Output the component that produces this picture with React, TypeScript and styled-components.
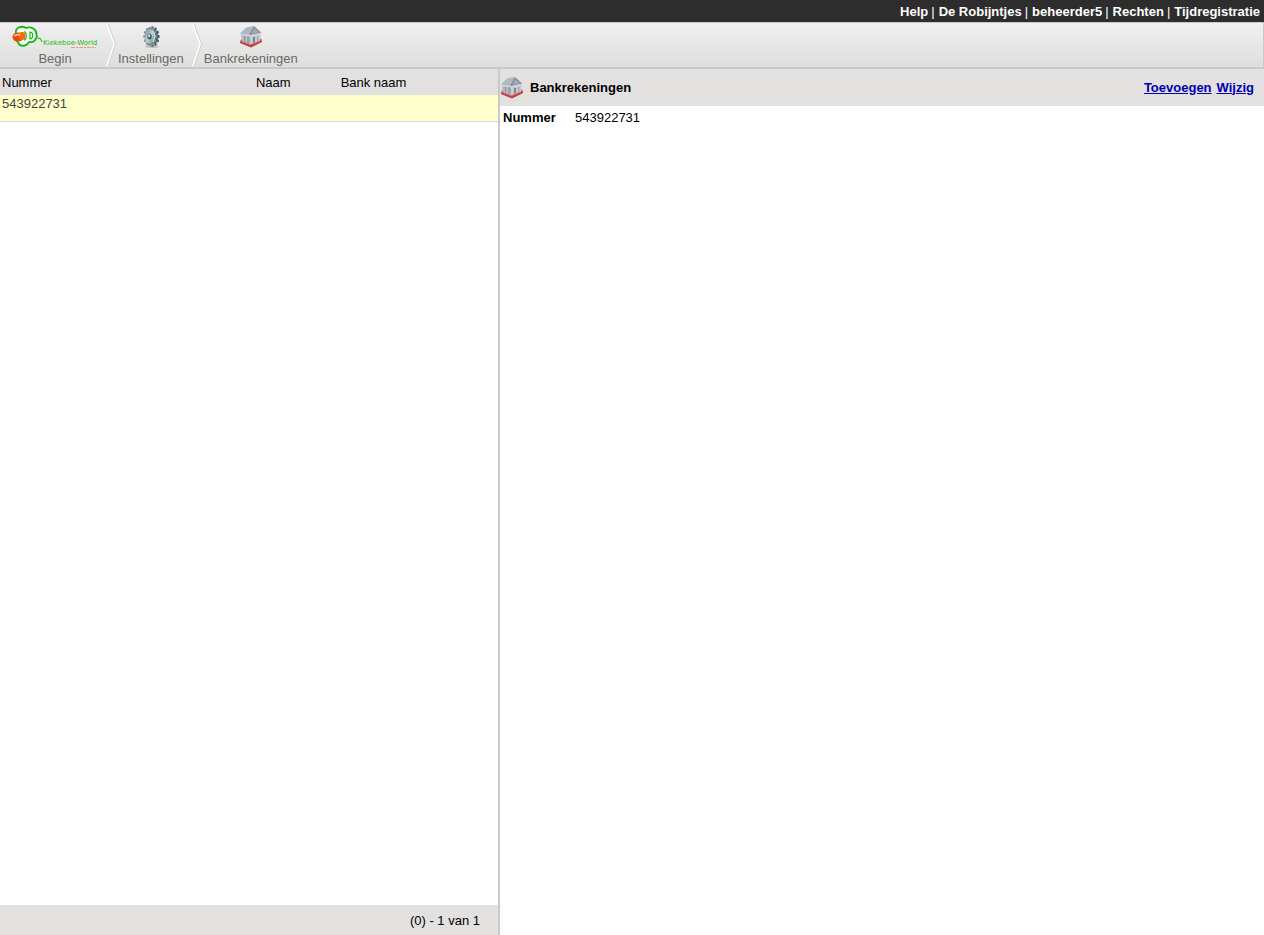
import React from "react";
import styled, { createGlobalStyle } from "styled-components";

const GlobalStyle = createGlobalStyle`
  * { box-sizing: border-box; }
  body {
    margin: 0;
    background: #fff;
    color: #000;
    font: 13px/16px "Liberation Sans", Arial, sans-serif;
  }
`;

const Page = styled.div`
  display: flex;
  flex-direction: column;
  min-height: 100vh;
`;

const TopBar = styled.nav`
  display: flex;
  justify-content: flex-end;
  align-items: center;
  height: 22px;
  padding: 1px 4px 0 0;
  background: #2d2d2d;
  color: #fff;
`;

const TopLink = styled.a`
  color: #fff;
  font-weight: bold;
  text-decoration: none;
  &:not(:first-child)::before {
    content: "|";
    font-weight: normal;
    padding: 0 4px 0 3px;
  }
`;

const CrumbBar = styled.nav`
  display: flex;
  height: 47px;
  padding-left: 10px;
  border: solid #c9c9c9;
  border-width: 1px 1px 2px 0;
  background: linear-gradient(#f0f0f0, #dededd);
`;

const Crumb = styled.a`
  display: flex;
  flex-direction: column;
  align-items: center;
  padding: 2px 7px 0 2px;
  color: #6b6964;
  text-decoration: none;
`;

const CrumbIcon = styled.span`
  display: flex;
  align-items: center;
  justify-content: center;
  height: 24px;
  margin-bottom: 2px;
`;

const Panes = styled.main`
  display: grid;
  grid-template-columns: 500px 1fr;
  flex: 1;
`;

const ListPane = styled.section`
  display: flex;
  flex-direction: column;
  border-right: 2px solid #c9c9c9;
`;

const ListTable = styled.table`
  width: 100%;
  table-layout: fixed;
  border-collapse: separate;
  border-spacing: 0;
`;

const HeadCell = styled.th<{ $width?: string }>`
  width: ${(p) => p.$width ?? "auto"};
  height: 26px;
  padding: 2px 2px 0;
  background: #e2e1e0;
  font-weight: normal;
  text-align: left;
`;

const Cell = styled.td`
  height: 27px;
  padding: 1px 2px 0;
  border-bottom: 1px solid #d6d6d0;
  background: #ffffcc;
  color: #444;
  vertical-align: top;
`;

const ListFooter = styled.footer`
  margin-top: auto;
  height: 30px;
  padding: 8px 18px 0;
  background: #e2e1e0;
  text-align: right;
`;

const DetailPane = styled.section`
  min-width: 0;
`;

const DetailHeader = styled.header`
  display: flex;
  align-items: center;
  gap: 6px;
  height: 37px;
  padding: 0 10px 0 0;
  background: #e2e1e0;
`;

const Title = styled.h1`
  flex: 1;
  margin: 0;
  font-size: 13px;
  line-height: 16px;
`;

const Actions = styled.div`
  display: flex;
  gap: 5px;
`;

const ActionLink = styled.a`
  color: #0000b4;
  font-weight: bold;
`;

const Fields = styled.dl`
  display: grid;
  grid-template-columns: 72px 1fr;
  margin: 0;
  padding: 4px 3px;
`;

const FieldName = styled.dt`
  font-weight: bold;
`;

const FieldValue = styled.dd`
  margin: 0;
`;

const LogoText = styled.text`
  font: 7px "DejaVu Sans", sans-serif;
  fill: #20bc20;
`;

const WorldLogo = () => (
  <svg width="86" height="24" viewBox="0 0 86 24" aria-hidden="true">
    <path
      d="M4 8C3 3 9 0 14 3C19 1 25 4 24.5 10C25 15 21 18 17 17C14 22 7 22 6 17C3 15 3 11 4 8Z"
      fill="#fff" stroke="#16b80e" strokeWidth="1.8"
    />
    <path d="M12 7C15 6 15 15 12 15" fill="none" stroke="#16b80e" strokeWidth="1.2" />
    <path d="M18 7V14C21.5 14 21.5 7 18 7Z" fill="none" stroke="#16b80e" strokeWidth="1.2" />
    <path d="M25 11L27 14L28 13L30 17" fill="none" stroke="#16b80e" strokeWidth="1" />
    <ellipse cx="6" cy="12" rx="5.5" ry="4.5" fill="#e8490b" />
    <ellipse cx="10" cy="11" rx="3.5" ry="4" fill="#f56a08" />
    <path d="M2.5 11Q5 9 8 10" fill="none" stroke="#ffc0a0" strokeWidth="1.8" />
    <LogoText x="31" y="20">Kiekeboe-World</LogoText>
    <path d="M59 22.5H84" stroke="#ee9b7c" strokeWidth="1" strokeDasharray="4 1 2 1" />
  </svg>
);

const teeth = [0, 30, 60, 90, 120, 150, 180, 210, 240, 270, 300, 330];

const GearIcon = () => (
  <svg width="24" height="24" viewBox="0 0 24 24" aria-hidden="true">
    <defs>
      <linearGradient id="gear" x1="0" y1="0" x2="1" y2="1">
        <stop offset="0" stopColor="#7d8d96" />
        <stop offset="0.5" stopColor="#c3d0d2" />
        <stop offset="1" stopColor="#547887" />
      </linearGradient>
    </defs>
    <ellipse cx="13" cy="21.5" rx="7" ry="1.5" fill="#b9bbba" />
    <g transform="translate(13.5 11.5) scale(.7 1)">
      {teeth.map((a) => (
        <rect key={a} x="-1.5" y="-10" width="3" height="5" fill="#3c5966" transform={`rotate(${a})`} />
      ))}
      <circle r="8" fill="#4d6a78" />
    </g>
    <g transform="translate(11 11.5) scale(.7 1)">
      {teeth.map((a) => (
        <rect key={a} x="-1.4" y="-9.5" width="2.8" height="4" fill="#7f919a" transform={`rotate(${a})`} />
      ))}
      <circle r="7.5" fill="url(#gear)" />
      <circle cx="-.6" r="3" fill="#47535b" />
      <circle cx="-1.2" cy="-.8" r="1.5" fill="#e9eceb" />
    </g>
    <path d="M14 6L16 11L14 17" fill="none" stroke="#cbdce0" strokeWidth="1.2" />
  </svg>
);

const BankIcon = () => (
  <svg width="24" height="24" viewBox="0 0 24 24" aria-hidden="true">
    <path d="M1 16L12 20L23 15V17L12 22.5L1 18Z" fill="#c43a3d" />
    <path d="M1 16L3 14L21 13L23 15L12 20.5Z" fill="#dc5558" />
    <path d="M2 8L11 10V19.5L3 16.5Z" fill="#a4acb3" />
    <path d="M11 10L22 8L21 15.5L11 19.5Z" fill="#c6cbcf" />
    <path d="M5.5 10V16.5M9 11V18" stroke="#8c959c" strokeWidth="1" />
    <path d="M4 10V16M7.3 10V17" stroke="#c5cbd0" strokeWidth="1" />
    <path d="M15 12V17.5" stroke="#78828a" strokeWidth="2" />
    <path d="M18.8 11V16" stroke="#959da4" strokeWidth="1" />
    <path d="M1 8.5L7 2.5L15 1L11 9.5Z" fill="#adb8c0" />
    <path d="M10 9.5L15 1L22.5 8L11 10.5Z" fill="#84919b" />
    <path d="M13 8.5L15 3.5L19.5 7.3Z" fill="#a4afb7" />
    <path d="M1 8.5L11 10L22.5 7.5V9L11 11.5L1 10Z" fill="#d3d8dc" />
  </svg>
);

const Separator = () => (
  <svg width="11" height="44" viewBox="0 0 11 44" aria-hidden="true">
    <path d="M2 1L9.5 21L2 43" fill="none" stroke="#fff" strokeWidth="2" />
    <path d="M3.2 1L10.5 21L3.2 43" fill="none" stroke="#cecece" strokeWidth="1" />
  </svg>
);

const topLinks = ["Help", "De Robijntjes", "beheerder5", "Rechten", "Tijdregistratie"];

export default function App() {
  return (
    <Page>
      <GlobalStyle />
      <TopBar>
        {topLinks.map((label) => (
          <TopLink key={label} href="#">{label}</TopLink>
        ))}
      </TopBar>
      <CrumbBar aria-label="Kruimelpad">
        <Crumb href="#">
          <CrumbIcon><WorldLogo /></CrumbIcon>
          Begin
        </Crumb>
        <Separator />
        <Crumb href="#">
          <CrumbIcon><GearIcon /></CrumbIcon>
          Instellingen
        </Crumb>
        <Separator />
        <Crumb href="#">
          <CrumbIcon><BankIcon /></CrumbIcon>
          Bankrekeningen
        </Crumb>
      </CrumbBar>
      <Panes>
        <ListPane>
          <ListTable>
            <thead>
              <tr>
                <HeadCell $width="51%">Nummer</HeadCell>
                <HeadCell $width="17%">Naam</HeadCell>
                <HeadCell>Bank naam</HeadCell>
              </tr>
            </thead>
            <tbody>
              <tr>
                <Cell>543922731</Cell>
                <Cell />
                <Cell />
              </tr>
            </tbody>
          </ListTable>
          <ListFooter>(0) - 1 van 1</ListFooter>
        </ListPane>
        <DetailPane>
          <DetailHeader>
            <BankIcon />
            <Title>Bankrekeningen</Title>
            <Actions>
              <ActionLink href="#">Toevoegen</ActionLink>
              <ActionLink href="#">Wijzig</ActionLink>
            </Actions>
          </DetailHeader>
          <Fields>
            <FieldName>Nummer</FieldName>
            <FieldValue>543922731</FieldValue>
          </Fields>
        </DetailPane>
      </Panes>
    </Page>
  );
}
